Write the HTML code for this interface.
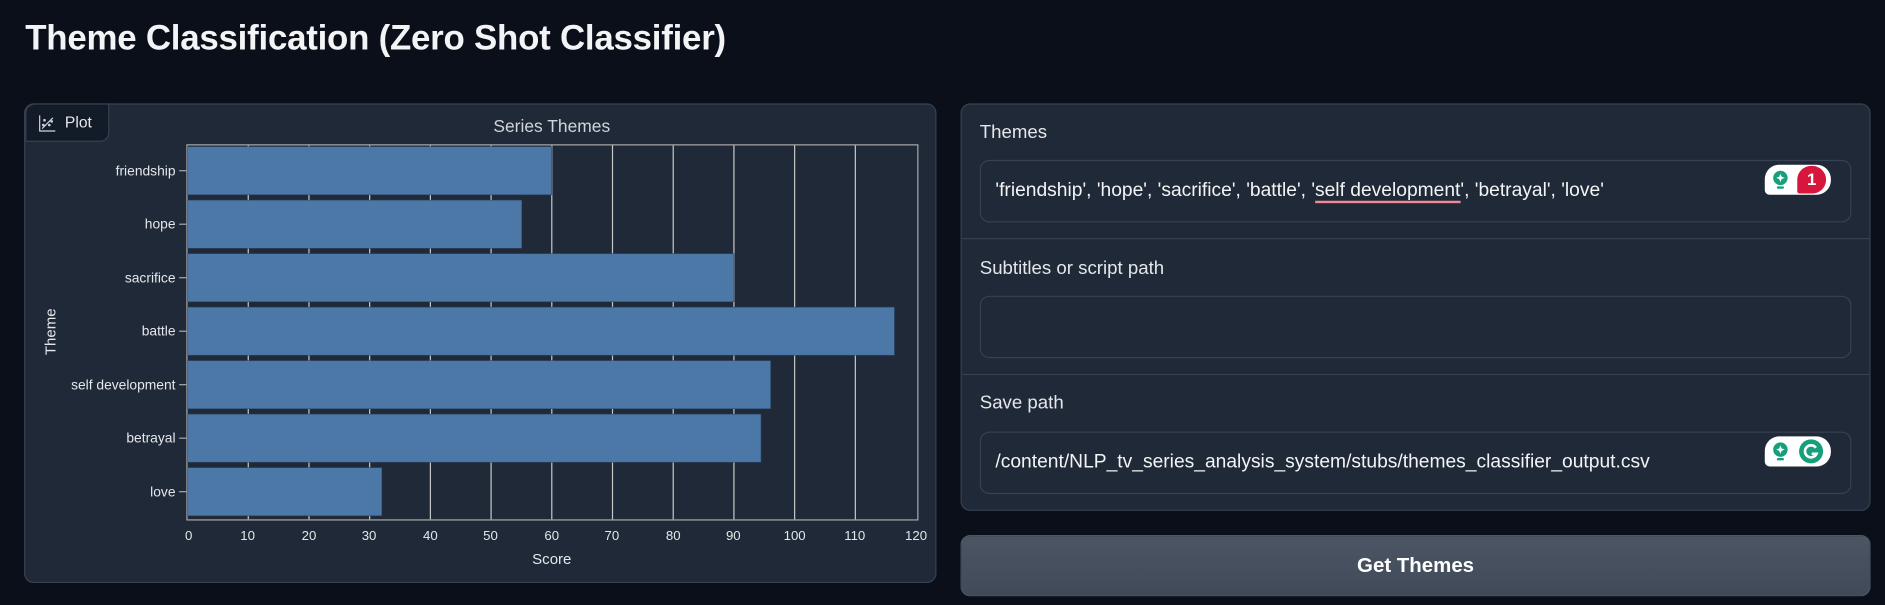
<!DOCTYPE html>
<html><head><meta charset="utf-8"><style>
html,body{margin:0;padding:0;background:#0b0f19;overflow:hidden;width:1885px;height:604px}
#w{position:absolute;left:0;top:0;width:1568px;height:503px;transform:scale(1.20217);transform-origin:0 0;font-family:"Liberation Sans",sans-serif;color:#e5e7eb}
.t{position:absolute;left:21px;top:16px;font-size:29px;font-weight:bold;color:#f3f4f6;letter-spacing:-0.2px}
.pan{position:absolute;background:#1f2937;border:1px solid #374151;border-radius:8px;box-sizing:border-box}
.tab{position:absolute;left:21px;top:86px;width:70px;height:32px;background:#131a28;border:1px solid #374151;border-radius:8px 0 8px 0;box-sizing:border-box;font-size:13px;color:#e5e7eb}
.lbl{position:absolute;left:815px;font-size:15.5px;color:#e5e7eb}
.inp{position:absolute;left:815px;width:725px;height:52px;border:1px solid #374151;border-radius:8px;box-sizing:border-box;font-size:16px;line-height:50px;padding-left:12px;color:#f3f4f6;white-space:nowrap}
.div{position:absolute;left:800px;width:755px;height:1px;background:#374151}
.btn{position:absolute;left:799px;top:445px;width:757px;height:51px;border-radius:8px;background:linear-gradient(#4b5563,#414a58);border:1px solid #4b5563;box-sizing:border-box;text-align:center;line-height:49px;font-size:17px;font-weight:bold;color:#fff}
.g{position:absolute;height:25px;background:#fff;border-radius:12px 12px 12px 4px}
</style></head><body><div id="w">
<div class="t">Theme Classification (Zero Shot Classifier)</div>
<div class="pan" style="left:20px;top:86px;width:759px;height:399px"></div>
<div class="tab"><svg style="position:absolute;left:9px;top:8px" width="16" height="16" viewBox="0 0 16 16" fill="none" stroke="#cbd5e1" stroke-width="1"><path d="M2 1v13h13"/><path d="M4 12l9-9"/><circle cx="6" cy="5" r=".6"/><circle cx="10" cy="9" r=".6"/><circle cx="12" cy="6" r=".6"/><circle cx="5" cy="9" r=".6"/></svg><span style="position:absolute;left:32px;top:7px">Plot</span></div>
<svg style="position:absolute;left:0;top:0" width="780" height="490">
<text x="459" y="110" fill="#d1d5db" font-size="14.5" text-anchor="middle" font-family="Liberation Sans">Series Themes</text>
<g stroke="#c8c8c8" stroke-width="1">
<line x1="206.5" y1="121" x2="206.5" y2="432"/><line x1="257" y1="121" x2="257" y2="432"/><line x1="307.5" y1="121" x2="307.5" y2="432"/><line x1="358" y1="121" x2="358" y2="432"/><line x1="408.5" y1="121" x2="408.5" y2="432"/><line x1="459" y1="121" x2="459" y2="432"/><line x1="509.5" y1="121" x2="509.5" y2="432"/><line x1="560" y1="121" x2="560" y2="432"/><line x1="610.5" y1="121" x2="610.5" y2="432"/><line x1="661" y1="121" x2="661" y2="432"/><line x1="711.5" y1="121" x2="711.5" y2="432"/>
<rect x="155.5" y="120.5" width="608" height="312" fill="none" stroke="#aaa"/>
</g>
<g fill="#4c78a8" stroke="#2f4a6a" stroke-width=".5">
<rect x="156" y="122" width="303" height="40"/>
<rect x="156" y="166.5" width="278" height="40"/>
<rect x="156" y="211" width="454.5" height="40"/>
<rect x="156" y="255.5" width="588" height="40"/>
<rect x="156" y="300" width="485" height="40"/>
<rect x="156" y="344.5" width="477" height="40"/>
<rect x="156" y="389" width="161.6" height="40"/>
</g>
<g fill="#e5e7eb" font-size="11.5" text-anchor="end" font-family="Liberation Sans">
<text x="146" y="146">friendship</text><text x="146" y="190">hope</text><text x="146" y="235">sacrifice</text><text x="146" y="279">battle</text><text x="146" y="324">self development</text><text x="146" y="368">betrayal</text><text x="146" y="413">love</text>
</g>
<g stroke="#aaa"><line x1="149" y1="142" x2="155" y2="142"/><line x1="149" y1="186.5" x2="155" y2="186.5"/><line x1="149" y1="231" x2="155" y2="231"/><line x1="149" y1="275.5" x2="155" y2="275.5"/><line x1="149" y1="320" x2="155" y2="320"/><line x1="149" y1="364.5" x2="155" y2="364.5"/><line x1="149" y1="409" x2="155" y2="409"/></g>
<g fill="#e5e7eb" font-size="11" text-anchor="middle" font-family="Liberation Sans">
<text x="157" y="449">0</text><text x="206" y="449">10</text><text x="257" y="449">20</text><text x="307" y="449">30</text><text x="358" y="449">40</text><text x="408" y="449">50</text><text x="459" y="449">60</text><text x="509" y="449">70</text><text x="560" y="449">80</text><text x="610" y="449">90</text><text x="661" y="449">100</text><text x="711" y="449">110</text><text x="762" y="449">120</text>
</g>
<text x="459" y="469" fill="#e5e7eb" font-size="12.5" text-anchor="middle" font-family="Liberation Sans">Score</text>
<text transform="translate(46,276) rotate(-90)" fill="#e5e7eb" font-size="12.5" text-anchor="middle" font-family="Liberation Sans">Theme</text>
</svg>
<div class="pan" style="left:799px;top:86px;width:757px;height:339px"></div>
<div class="lbl" style="top:102px">Themes</div>
<div class="inp" style="top:133px">'friendship', 'hope', 'sacrifice', 'battle', '<span style="border-bottom:2px solid #f08b94">self development</span>', 'betrayal', 'love'</div>
<div class="g" style="left:1468px;top:137px;width:55px"><svg style="position:absolute;left:6px;top:4px" width="14" height="17" viewBox="0 0 14 17"><circle cx="7" cy="7" r="6" fill="#15a07b"/><path d="M7 3.5l1 2.5 2.5 1-2.5 1-1 2.5-1-2.5-2.5-1 2.5-1z" fill="#fff"/><rect x="4" y="14" width="6" height="2" rx="1" fill="#15a07b"/></svg><div style="position:absolute;left:27px;top:1px;width:24px;height:23px;background:#d6163c;border-radius:12px 12px 12px 2px;color:#fff;font-weight:bold;font-size:14px;text-align:center;line-height:23px">1</div></div>
<div class="div" style="top:198px"></div>
<div class="lbl" style="top:215px">Subtitles or script path</div>
<div class="inp" style="top:246px"></div>
<div class="div" style="top:311px"></div>
<div class="lbl" style="top:327px">Save path</div>
<div class="inp" style="top:359px">/content/NLP_tv_series_analysis_system/stubs/themes_classifier_output.csv</div>
<div class="g" style="left:1468px;top:363px;width:55px"><svg style="position:absolute;left:6px;top:4px" width="14" height="17" viewBox="0 0 14 17"><circle cx="7" cy="7" r="6" fill="#15a07b"/><path d="M7 3.5l1 2.5 2.5 1-2.5 1-1 2.5-1-2.5-2.5-1 2.5-1z" fill="#fff"/><rect x="4" y="14" width="6" height="2" rx="1" fill="#15a07b"/></svg><svg style="position:absolute;left:28px;top:2px" width="21" height="21" viewBox="0 0 21 21"><circle cx="10.5" cy="10.5" r="10" fill="#15a07b"/><path d="M14.5 7.5a5 5 0 1 0 0.5 5h-4" fill="none" stroke="#fff" stroke-width="2.2"/></svg></div>
<div class="btn">Get Themes</div>
</div></body></html>
